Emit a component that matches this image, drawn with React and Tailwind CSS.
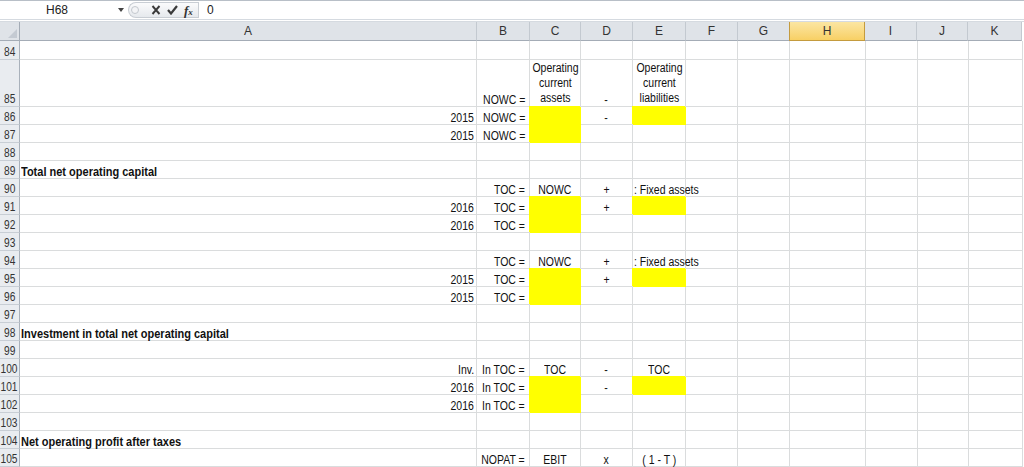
const COLS = [
  { k: 'A', w: 'w-[457px]' },
  { k: 'B', w: 'w-[53px]' },
  { k: 'C', w: 'w-[51px]' },
  { k: 'D', w: 'w-[52px]' },
  { k: 'E', w: 'w-[53px]' },
  { k: 'F', w: 'w-[52px]' },
  { k: 'G', w: 'w-[52px]' },
  { k: 'H', w: 'w-[76px]' },
  { k: 'I', w: 'w-[52px]' },
  { k: 'J', w: 'w-[51px]' },
  { k: 'K', w: 'w-[54px]' },
];

const Y = { y: true };
const r = (t) => ({ t, a: 'r' });
const c = (t) => ({ t, a: 'c' });
const hd = (t) => ({ t, a: 'l', b: true });

const ROWS = [
  { n: 84 },
  {
    n: 85,
    tall: true,
    c: {
      B: r('NOWC ='),
      C: { t: ['Operating', 'current', 'assets'], a: 'c' },
      D: c('-'),
      E: { t: ['Operating', 'current', 'liabilities'], a: 'c' },
    },
  },
  { n: 86, c: { A: r('2015'), B: r('NOWC ='), C: Y, D: c('-'), E: Y } },
  { n: 87, c: { A: r('2015'), B: r('NOWC ='), C: Y } },
  { n: 88 },
  { n: 89, c: { A: hd('Total net operating capital') } },
  { n: 90, c: { B: r('TOC ='), C: c('NOWC'), D: c('+'), E: { t: ': Fixed assets', a: 'l' } } },
  { n: 91, c: { A: r('2016'), B: r('TOC ='), C: Y, D: c('+'), E: Y } },
  { n: 92, c: { A: r('2016'), B: r('TOC ='), C: Y } },
  { n: 93 },
  { n: 94, c: { B: r('TOC ='), C: c('NOWC'), D: c('+'), E: { t: ': Fixed assets', a: 'l' } } },
  { n: 95, c: { A: r('2015'), B: r('TOC ='), C: Y, D: c('+'), E: Y } },
  { n: 96, c: { A: r('2015'), B: r('TOC ='), C: Y } },
  { n: 97 },
  { n: 98, c: { A: hd('Investment in total net operating capital') } },
  { n: 99 },
  { n: 100, c: { A: r('Inv.'), B: r('In TOC ='), C: c('TOC'), D: c('-'), E: c('TOC') } },
  { n: 101, c: { A: r('2016'), B: r('In TOC ='), C: Y, D: c('-'), E: Y } },
  { n: 102, c: { A: r('2016'), B: r('In TOC ='), C: Y } },
  { n: 103 },
  { n: 104, c: { A: hd('Net operating profit after taxes') } },
  { n: 105, c: { B: r('NOPAT ='), C: c('EBIT'), D: c('x'), E: c('( 1 - T )') } },
];

// cell text is Arial Narrow in the sheet; squeeze Liberation Sans to match
function Cell({ col, cell }) {
  const align =
    cell?.a === 'r' ? 'justify-end text-right' : cell?.a === 'c' ? 'justify-center text-center' : 'justify-start';
  const origin = cell?.a === 'r' ? 'origin-right' : cell?.a === 'c' ? 'origin-center' : 'origin-left';
  const pad = col.k === 'B' ? 'pr-[4px]' : col.k === 'A' ? 'pr-[2px] pl-[1px]' : 'px-[1px]';
  return (
    <div
      className={`${col.w} shrink-0 flex items-end border-r border-b ${pad} ${align} ${
        cell?.y ? 'bg-[#ffff00] border-[#ffff00] shadow-[-1px_-1px_0_0_#ffff00]' : 'border-[#dadcdd]'
      }`}
    >
      {cell?.t && Array.isArray(cell.t) ? (
        <div className="flex flex-col items-center leading-[15px] scale-x-[0.84] origin-bottom">
          {cell.t.map((l) => (
            <span key={l} className="whitespace-nowrap">{l}</span>
          ))}
        </div>
      ) : cell?.t ? (
        <span
          className={`inline-block whitespace-nowrap leading-[12px] ${origin} ${
            cell.b ? 'font-bold scale-x-[0.88]' : 'scale-x-[0.84]'
          }`}
        >
          {cell.t}
        </span>
      ) : null}
    </div>
  );
}

function Row({ row }) {
  const h = row.tall ? 'h-[47px]' : row.n === 84 ? 'h-[19px]' : 'h-[18px]';
  return (
    <div className={`flex ${h}`}>
      <div className="w-[20px] shrink-0 flex items-end justify-center bg-[#e9ecf0] border-r border-b border-r-[#a9b1bb] border-b-[#c8ced5] text-[12px] leading-[13px] text-[#333] font-['Liberation_Sans',Arial,sans-serif]">
        <span className="inline-block scale-x-[0.85] whitespace-nowrap">{row.n}</span>
      </div>
      {COLS.map((col) => (
        <Cell key={col.k} col={col} cell={row.c?.[col.k]} />
      ))}
    </div>
  );
}

function FormulaBar() {
  return (
    <div className="h-[22px] flex border-t border-[#b8bfc7] border-b-[3px] border-b-[#d5dae0] border-double bg-white text-[12px] text-[#222] font-['Liberation_Sans',Arial,sans-serif]">
      <div className="w-[128px] shrink-0 flex items-center">
        <span className="pl-[46px]">H68</span>
        <svg className="ml-auto mr-[4px]" width="6" height="4" viewBox="0 0 6 4">
          <path d="M0 0 H6 L3 4 Z" fill="#444" />
        </svg>
      </div>
      <div className="w-[70px] shrink-0 flex items-center my-[1px] rounded-l-[10px] border border-r-0 border-[#c9ced4] bg-linear-to-b from-[#fbfbfc] to-[#e6e9ed]">
        <div className="ml-[2px] w-[8px] h-[8px] rounded-full border border-[#c3c8ce] bg-[#f3f4f6]" />
        <svg className="ml-[12px]" width="10" height="10" viewBox="0 0 10 10">
          <path d="M1.5 1 L8.5 9 M8.5 1 L1.5 9" stroke="#3a3a3a" strokeWidth="1.9" />
        </svg>
        <svg className="ml-[6px]" width="11" height="10" viewBox="0 0 11 10">
          <path d="M1 5 L4 8.5 L10 1" stroke="#3a3a3a" strokeWidth="2.2" fill="none" />
        </svg>
        <span className="ml-[6px] italic font-bold text-[13px] text-[#333] font-['Liberation_Serif',serif] leading-none">
          f<span className="text-[9px]">x</span>
        </span>
      </div>
      <div className="w-px bg-[#c9ced4] my-[1px]" />
      <div className="flex-1 flex items-center pl-[8px]">0</div>
    </div>
  );
}

function HeaderRow() {
  return (
    <div className="flex h-[19px] text-[12px] text-[#333] font-['Liberation_Sans',Arial,sans-serif]">
      <div className="w-[20px] shrink-0 bg-[#dfe3e8] border-r border-b border-[#a4acb6] flex items-end justify-end p-[2px]">
        <svg width="9" height="9" viewBox="0 0 9 9">
          <path d="M9 0 V9 H0 Z" fill="#c4cad2" />
        </svg>
      </div>
      {COLS.map((col) =>
        col.k === 'H' ? (
          <div
            key={col.k}
            className={`${col.w} shrink-0 flex items-center justify-center border-x border-b border-[#c49b3e] bg-linear-to-b from-[#fbe6a2] to-[#f8d064] -ml-px`}
          >
            {col.k}
          </div>
        ) : (
          <div
            key={col.k}
            className={`${col.w} shrink-0 flex items-center justify-center bg-[#dfe3e8] border-r border-b border-r-[#c3c9d0] border-b-[#a4acb6]`}
          >
            {col.k}
          </div>
        )
      )}
    </div>
  );
}

export default function App() {
  return (
    <div className="w-[1024px] h-[467px] overflow-hidden bg-white">
      <FormulaBar />
      <HeaderRow />
      <div className="text-[12.5px] text-[#111] font-['Liberation_Sans',Arial,sans-serif]">
        {ROWS.map((row) => (
          <Row key={row.n} row={row} />
        ))}
      </div>
    </div>
  );
}
